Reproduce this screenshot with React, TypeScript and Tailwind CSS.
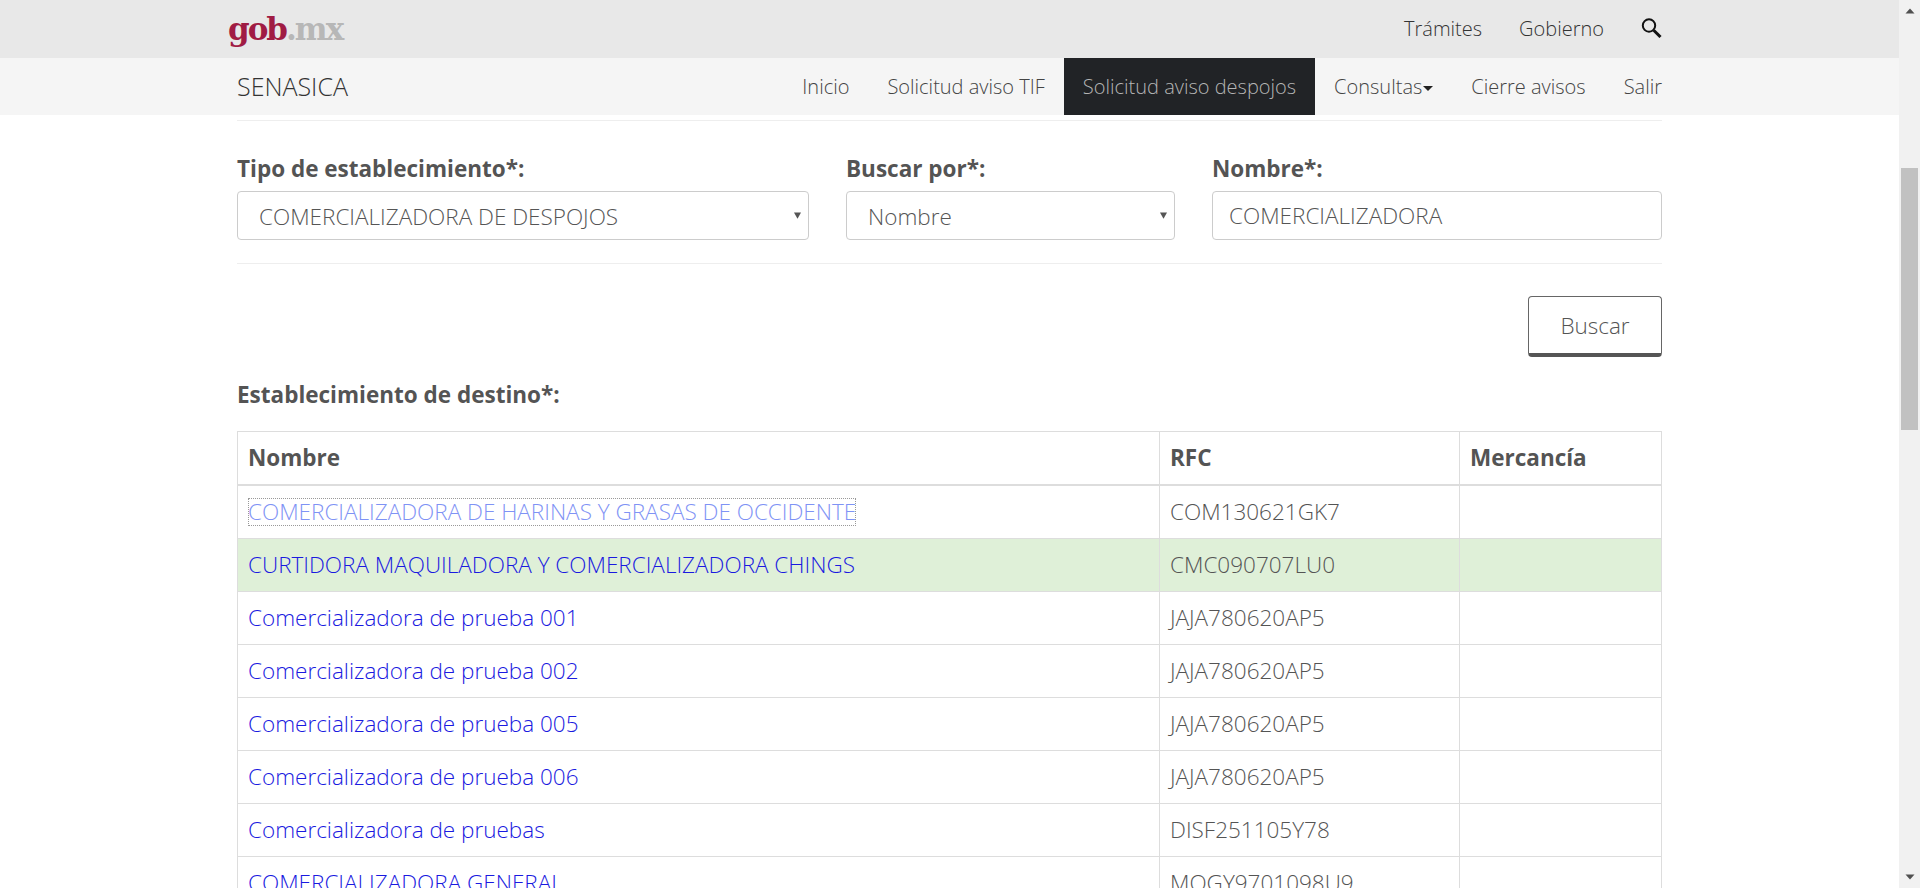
import React from "react";

const rows = [
  { nombre: "COMERCIALIZADORA DE HARINAS Y GRASAS DE OCCIDENTE", rfc: "COM130621GK7", focused: true },
  { nombre: "CURTIDORA MAQUILADORA Y COMERCIALIZADORA CHINGS", rfc: "CMC090707LU0", selected: true },
  { nombre: "Comercializadora de prueba 001", rfc: "JAJA780620AP5" },
  { nombre: "Comercializadora de prueba 002", rfc: "JAJA780620AP5" },
  { nombre: "Comercializadora de prueba 005", rfc: "JAJA780620AP5" },
  { nombre: "Comercializadora de prueba 006", rfc: "JAJA780620AP5" },
  { nombre: "Comercializadora de pruebas", rfc: "DISF251105Y78" },
  { nombre: "COMERCIALIZADORA GENERAL", rfc: "MOGY9701098U9" },
];

const navItems = ["Inicio", "Solicitud aviso TIF", "Solicitud aviso despojos", "Consultas", "Cierre avisos", "Salir"];

function Caret() {
  return (
    <svg className="absolute right-[8px] top-[21px] text-[#555]" width="7" height="7" viewBox="0 0 7 7">
      <path d="M0 0.500h7L3.500 6.800z" fill="currentColor" />
    </svg>
  );
}

function SelectField({ label, value, className }: { label: string; value: string; className: string }) {
  return (
    <div className={className}>
      <label className="mb-[8px] block text-[22.5px] leading-[28px] font-bold text-[#545454]">{label}</label>
      <div className="relative">
        <select
          defaultValue={value}
          className="h-[49px] w-full appearance-none rounded-[4px] border border-[#ccc] bg-white pt-[2px] pl-[21px] pr-[30px] text-[22.5px] font-light text-[#555]"
        >
          <option>{value}</option>
        </select>
        <Caret />
      </div>
    </div>
  );
}

function Scrollbar() {
  return (
    <div className="flex h-[888px] w-[21px] shrink-0 flex-col items-center bg-[#f1f1f1]">
      <svg className="mt-[8px]" width="10" height="6" viewBox="0 0 10 6">
        <path d="M5 0.5L9.5 5.5H0.5z" fill="#505050" />
      </svg>
      <div className="mt-[154px] h-[262px] w-[17px] bg-[#c1c1c1]" />
      <svg className="mt-auto mb-[8px]" width="10" height="6" viewBox="0 0 10 6">
        <path d="M0.5 0.5H9.5L5 5.5z" fill="#505050" />
      </svg>
    </div>
  );
}

export default function App() {
  return (
    <div className="flex h-[888px] overflow-hidden bg-white font-['Open_Sans',sans-serif] text-[22.5px] font-light text-[#545454]">
      <div className="min-w-0 flex-1">
        {/* gob.mx top bar */}
        <div className="h-[58px] bg-[#e8e8e8]">
          <div className="mx-auto flex h-full w-[1425px] items-center">
            <div className="ml-[-9px] font-['DejaVu_Serif',serif] text-[31px] leading-none font-bold tracking-[-2px]">
              <span className="text-[#a01c44]">gob</span>
              <span className="text-[#b7b7b7]">.mx</span>
            </div>
            <div className="ml-auto flex items-center gap-[37px] text-[20px] text-[#333]">
              <span>Trámites</span>
              <span>Gobierno</span>
              <svg className="mt-[-2px]" width="21" height="20" viewBox="0 0 21 20" fill="none" stroke="#111">
                <circle cx="8" cy="7.500" r="6.200" strokeWidth="2" />
                <path d="M12.700 12.200L19.500 19" strokeWidth="3" />
              </svg>
            </div>
          </div>
        </div>

        {/* sub nav */}
        <div className="h-[57px] bg-[#f5f5f5]">
          <div className="mx-auto flex h-full w-[1425px] items-center justify-between">
            <span className="text-[25px] text-[#333]">SENASICA</span>
            <nav className="mr-[-19px] flex h-full text-[20px]">
              {navItems.map((item) => (
                <a
                  key={item}
                  className={`flex h-full items-center px-[19px] ${
                    item === "Solicitud aviso despojos" ? "bg-[#212326] text-[#b5b5b5]" : "text-[#444]"
                  }`}
                >
                  {item}
                  {item === "Consultas" && (
                    <svg className="ml-[1px] mt-[3px]" width="10" height="5" viewBox="0 0 10 5">
                      <path d="M0 0h10L5 5z" fill="#222" />
                    </svg>
                  )}
                </a>
              ))}
            </nav>
          </div>
        </div>

        <div className="mx-auto w-[1425px]">
          <hr className="mt-[5px] border-t border-[#eee]" />
          <div className="mt-[34px] flex gap-[37px]">
            <SelectField label="Tipo de establecimiento*:" value="COMERCIALIZADORA DE DESPOJOS" className="w-[572px]" />
            <SelectField label="Buscar por*:" value="Nombre" className="w-[329px]" />
            <div className="flex-1">
              <label className="mb-[8px] block text-[22.5px] leading-[28px] font-bold">Nombre*:</label>
              <input
                defaultValue="COMERCIALIZADORA"
                className="h-[49px] w-full rounded-[4px] border border-[#ccc] bg-white px-[16px] text-[22.5px] font-light text-[#555]"
              />
            </div>
          </div>
          <hr className="mt-[23px] border-t border-[#eee]" />

          <div className="mt-[32px] flex justify-end">
            <button className="h-[61px] w-[134px] rounded-[4px] border border-b-[4px] border-[#666] border-b-[#555] bg-white pt-[2px] text-[22.5px] font-light text-[#545454]">
              Buscar
            </button>
          </div>

          <p className="mt-[25px] text-[22.5px] leading-[26px] font-bold">Establecimiento de destino*:</p>

          <table className="mt-[23px] w-full table-fixed border-collapse">
            <thead>
              <tr className="h-[53px]">
                <th className="w-[922px] border border-b-2 border-[#ddd] px-[10px] text-left font-bold">Nombre</th>
                <th className="w-[300px] border border-b-2 border-[#ddd] px-[10px] text-left font-bold">RFC</th>
                <th className="border border-b-2 border-[#ddd] px-[10px] text-left font-bold">Mercancía</th>
              </tr>
            </thead>
            <tbody>
              {rows.map((row) => (
                <tr
                  key={row.nombre}
                  className={`${row.focused ? "h-[54px]" : "h-[53px]"} ${row.selected ? "bg-[#dff0d8]" : ""}`}
                >
                  <td className="border border-[#ddd] px-[10px]">
                    <a
                      className={
                        row.focused
                          ? "inline-block leading-[28px] text-[#7f93f5] outline-1 -outline-offset-1 outline-dotted outline-[#999]"
                          : "text-[#1a1ae0]"
                      }
                    >
                      {row.nombre}
                    </a>
                  </td>
                  <td className="border border-[#ddd] px-[10px]">{row.rfc}</td>
                  <td className="border border-[#ddd] px-[10px]"></td>
                </tr>
              ))}
            </tbody>
          </table>
        </div>
      </div>
      <Scrollbar />
    </div>
  );
}
